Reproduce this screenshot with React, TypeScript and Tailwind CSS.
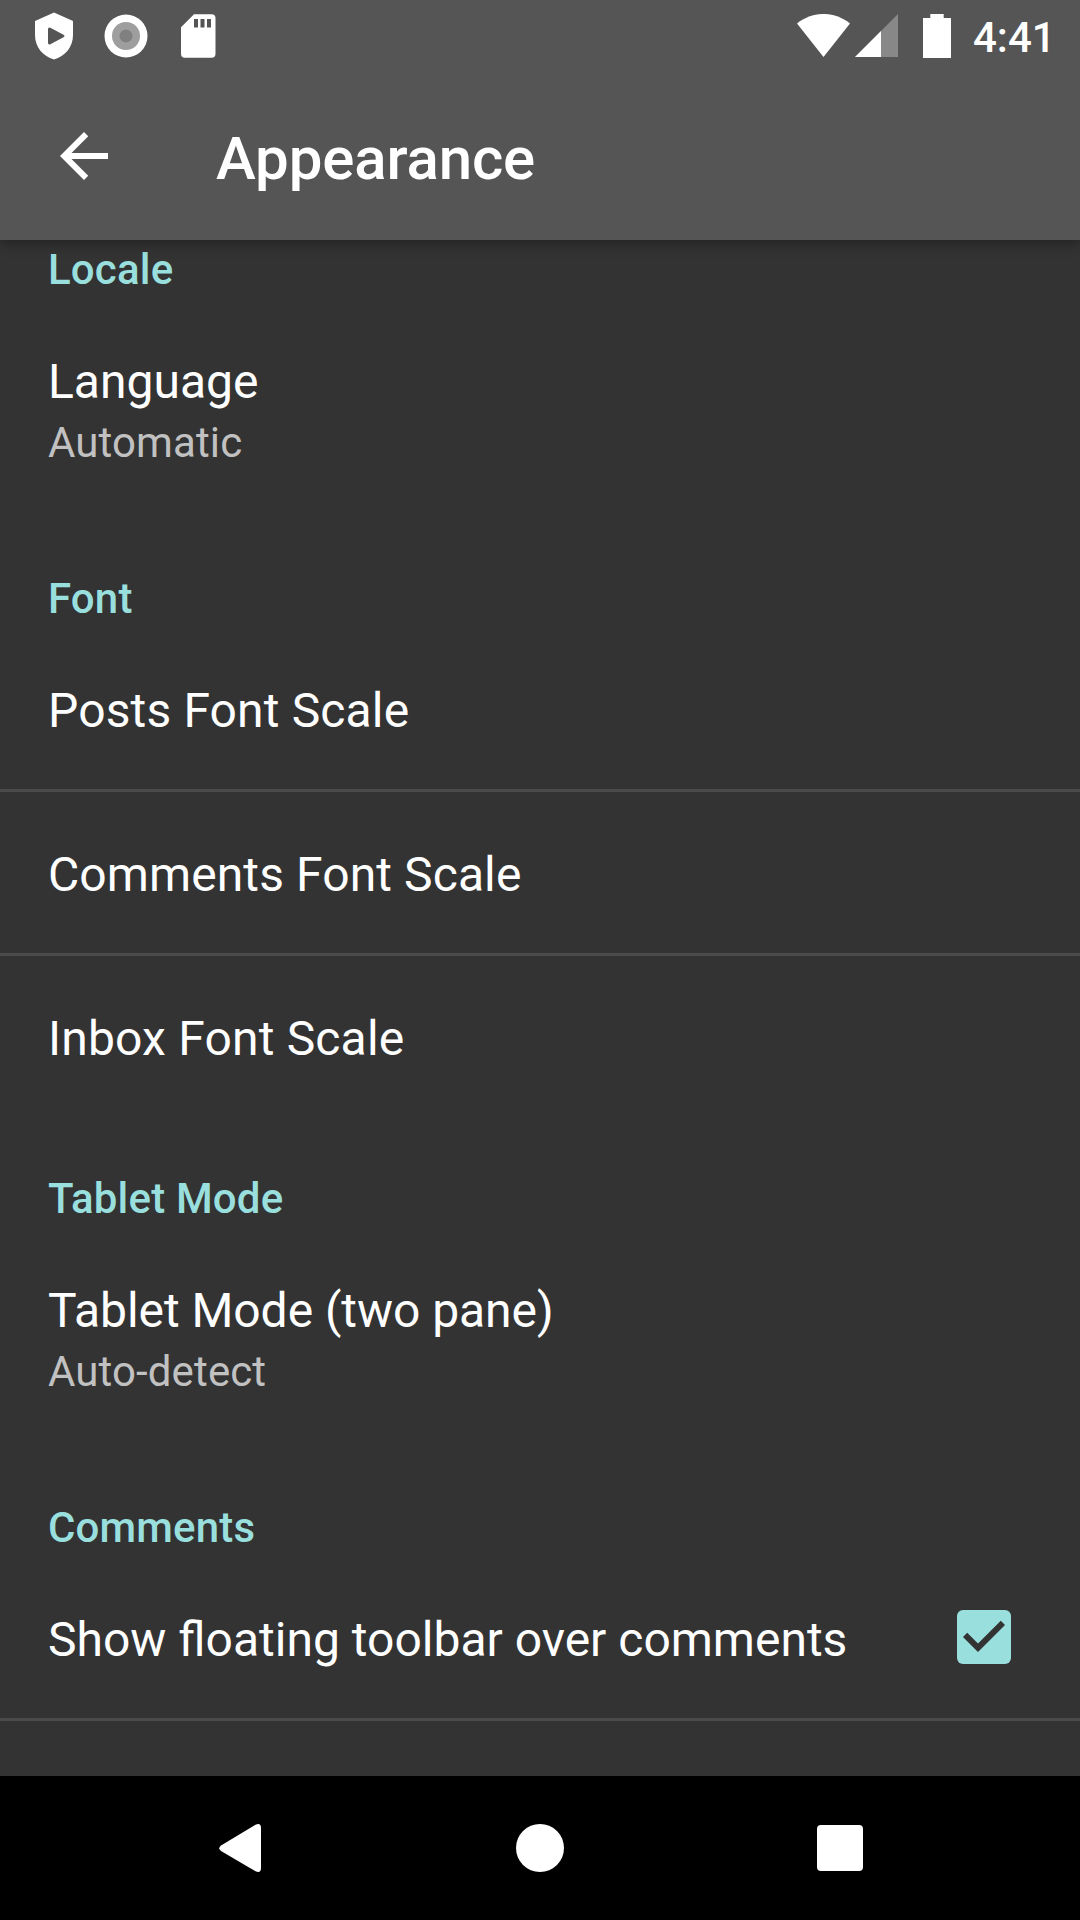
import React from "react";

function Header({ children, className = "pt-[57px]" }: { children: React.ReactNode; className?: string }) {
  return (
    <h2 className={`shrink-0 px-12 pb-1 text-[42px] leading-[50px] font-medium tracking-[0.17px] text-[#99dfdd] ${className}`}>
      {children}
    </h2>
  );
}

type ItemProps = { title: string; summary?: string; divider?: boolean; checked?: boolean; tracking?: string };

function Item({ title, summary, divider, checked, tracking = "tracking-normal" }: ItemProps) {
  return (
    <div className={`flex shrink-0 items-start justify-between pr-[69px] pl-12 ${divider ? "border-b-[3px] border-[#4b4b4b]" : ""}`}>
      <div className="pt-[54px] pb-[50px]">
        <div className={`text-[48px] leading-[57px] text-white ${tracking}`}>{title}</div>
        {summary && <div className="mt-2 -mb-px text-[42px] leading-[50px] tracking-[0.12px] text-[#c1c1c1]">{summary}</div>}
      </div>
      {checked && (
        <svg className="mt-[53px]" width="54" height="54" viewBox="0 0 54 54">
          <rect width="54" height="54" rx="6" fill="#99dfdd" />
          <path fill="#333333" d="M21 42L6 27L10.200 22.800L21 33.500L43.800 10.800L48 15Z" />
        </svg>
      )}
    </div>
  );
}

function StatusBar() {
  return (
    <div className="flex h-[72px] items-start justify-between pr-[30px] pl-[35px]">
      <div className="flex">
        <svg className="mt-3" width="38" height="48" viewBox="0 0 38 48">
          <path fill="#fff" fillRule="evenodd" d="M19 .5L38 9V23C38 35 30 44.500 19 47.500C8 44.500 0 35 0 23V9ZM13 17.500V30.500Q13 33.500 15.800 32L28.500 25.200Q30.500 24 28.500 22.800L15.800 16Q13 14.500 13 17.500Z" />
        </svg>
        <svg className="mt-3.5 ml-[31px]" width="44" height="44" viewBox="0 0 44 44">
          <circle cx="22" cy="22" r="21.500" fill="#fff" />
          <circle cx="22" cy="22" r="14" fill="#9e9e9e" />
          <circle cx="22" cy="22" r="6.500" fill="#808080" />
        </svg>
        <svg className="mt-3.5 ml-[33px]" width="35" height="44" viewBox="0 0 35 44">
          <path fill="#fff" fillRule="evenodd" d="M13 .3H30.500a4 4 0 0 1 4 4V39.700a4 4 0 0 1-4 4H4a4 4 0 0 1-4-4V13.300ZM13 5V13.500H17V5ZM19.500 5V13.500H23.500V5ZM26 5V13.500H30V5Z" />
        </svg>
      </div>
      <div className="flex">
        <svg className="mt-3.5" width="53" height="43" viewBox="0 0 53 43">
          <path fill="#fff" d="M0 9.500C16-3.200 37-3.200 53 9.500L26.500 43Z" />
        </svg>
        <svg className="mt-3.5 ml-[5px]" width="43" height="43" viewBox="0 0 43 43">
          <path fill="#888" d="M43 0V43H0Z" />
          <path fill="#fff" d="M26 17V43H0Z" />
        </svg>
        <svg className="mt-3.5 ml-[25px]" width="28" height="44" viewBox="0 0 28 44">
          <path fill="#fff" d="M7.300 0H20.700V4H28V44H0V4H7.300Z" />
        </svg>
        <span className="mt-[13px] ml-[22px] w-[77px] text-[42px] leading-[50px] font-medium whitespace-nowrap text-white">4:41</span>
      </div>
    </div>
  );
}

export default function App() {
  return (
    <div className="flex h-[1920px] w-[1080px] flex-col overflow-hidden bg-[#333333] font-['Roboto',sans-serif]">
      <div className="relative z-10 h-60 shrink-0 bg-[#555555] shadow-[0_4px_12px_rgba(0,0,0,0.33)]">
        <StatusBar />
        <div className="flex h-[168px] items-center pl-12">
          <svg width="72" height="72" viewBox="0 0 24 24">
            <path fill="#fff" d="M20 11H7.830l5.590-5.590L12 4l-8 8 8 8 1.410-1.410L7.830 13H20v-2z" />
          </svg>
          <h1 className="mt-1.5 ml-24 text-[60px] leading-[72px] font-medium tracking-[-0.15px] text-white">Appearance</h1>
        </div>
      </div>
      <main className="flex h-[1536px] shrink-0 flex-col overflow-hidden">
        <Header className="pt-[5px]">Locale</Header>
        <Item title="Language" summary="Automatic" />
        <Header>Font</Header>
        <Item title="Posts Font Scale" divider tracking="tracking-[0.15px]" />
        <Item title="Comments Font Scale" divider tracking="tracking-[0.1px]" />
        <Item title="Inbox Font Scale" tracking="tracking-[0.18px]" />
        <Header>Tablet Mode</Header>
        <Item title="Tablet Mode (two pane)" summary="Auto-detect" tracking="tracking-[-0.05px]" />
        <Header>Comments</Header>
        <Item title="Show floating toolbar over comments" divider checked />
      </main>
      <nav className="flex h-36 shrink-0 items-center justify-between bg-black pr-[217px] pl-[219px]">
        <svg width="44" height="48" viewBox="0 0 44 48">
          <path fill="#fff" d="M2 21.500L36.500 .8Q42 -1.500 42 4V44Q42 49.500 36.500 47.200L2 27Q-1.500 24.300 2 21.500Z" />
        </svg>
        <div className="size-12 rounded-full bg-white" />
        <div className="size-[46px] rounded-[4px] bg-white" />
      </nav>
    </div>
  );
}
